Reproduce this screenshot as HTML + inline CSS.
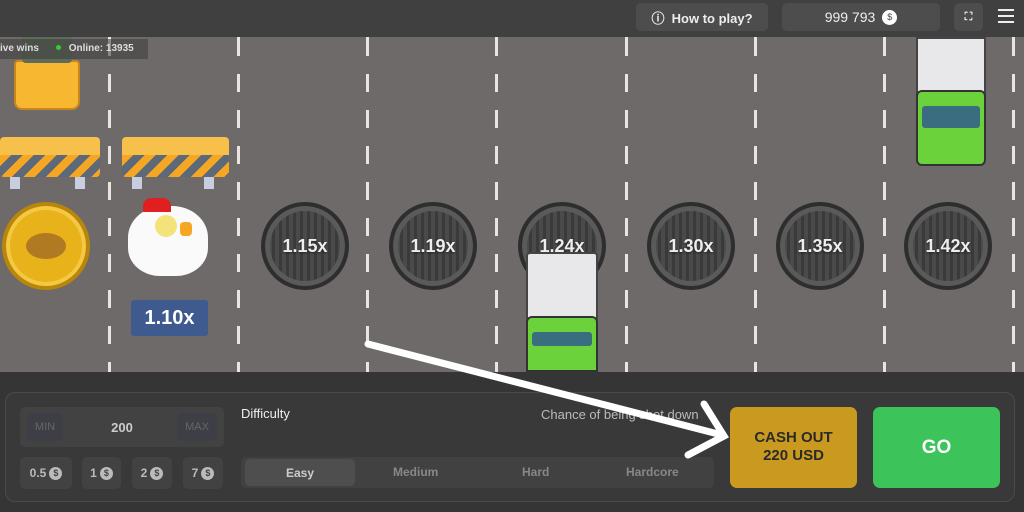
<!DOCTYPE html>
<html><head><style>
*{margin:0;padding:0;box-sizing:border-box}
body{width:1024px;height:512px;overflow:hidden;background:#6e6a69;font-family:"Liberation Sans",sans-serif;position:relative}
.top{position:absolute;left:0;top:0;width:1024px;height:37px;background:#404040}
.btn{position:absolute;background:#4d4d4d;border-radius:5px;color:#eee;font-weight:bold;font-size:13px;display:flex;align-items:center;justify-content:center}
.lane{position:absolute;top:37px;width:3px;height:335px;background:repeating-linear-gradient(to bottom,#e8e4e0 0 18px,transparent 18px 36px);background-position:0 1px}
.mh{position:absolute;width:88px;height:88px;border-radius:50%;background:repeating-linear-gradient(90deg,#3a3a3a 0 3px,#4a4a4a 3px 7px);border:4px solid #2e2e2e;box-shadow:inset 0 0 0 5px #5a5a5a;color:#eee;font-weight:bold;font-size:18px;display:flex;align-items:center;justify-content:center;text-shadow:0 1px 2px #222}
.bottom{position:absolute;left:0;top:372px;width:1024px;height:140px;background:#353535}
.panel{position:absolute;left:5px;top:392px;width:1010px;height:110px;border:1px solid #4a4a4a;border-radius:10px;background:#393939}
.s{position:absolute;background:#424242;border-radius:5px;color:#bbb;font-size:12px;font-weight:bold;display:flex;align-items:center;justify-content:center}
.coin{display:inline-block;width:13px;height:13px;border-radius:50%;background:#bbb;color:#444;font-size:9px;text-align:center;line-height:13px;margin-left:3px}
</style></head><body>
<div class="top"></div>
<div class="btn" style="left:636px;top:3px;width:132px;height:28px">ⓘ&nbsp; How to play?</div>
<div class="btn" style="left:782px;top:3px;width:158px;height:28px;font-weight:normal;font-size:14px">999 793 <span class="coin" style="width:15px;height:15px;background:#fff;margin-left:7px;line-height:15px">$</span></div>
<div class="btn" style="left:954px;top:3px;width:29px;height:28px;font-size:11px">⛶</div>
<div style="position:absolute;left:998px;top:9px;width:16px;height:14px;border-top:2px solid #eee;border-bottom:2px solid #eee"><div style="margin-top:4px;height:2px;background:#eee"></div></div>

<div class="lane" style="left:108px"></div><div class="lane" style="left:237px"></div><div class="lane" style="left:366px"></div><div class="lane" style="left:495px"></div><div class="lane" style="left:625px"></div><div class="lane" style="left:754px"></div><div class="lane" style="left:883px"></div><div class="lane" style="left:1012px"></div>

<!-- taxi -->
<div style="position:absolute;left:14px;top:60px;width:66px;height:50px;background:#f7b731;border-radius:4px 4px 8px 8px;border:2px solid #c8861a"></div>
<div style="position:absolute;left:22px;top:37px;width:50px;height:26px;background:#5e6a5a;border-radius:0 0 4px 4px"></div>
<div style="position:absolute;left:0;top:39px;width:148px;height:20px;background:rgba(60,60,60,.55);color:#ddd;font-size:10px;font-weight:bold;line-height:20px">ive wins <span style="display:inline-block;width:5px;height:5px;border-radius:50%;background:#3c3;margin:0 8px 1px 14px"></span>Online: 13935</div>
<!-- barriers -->
<div style="position:absolute;left:0;top:137px;width:100px;height:40px;background:repeating-linear-gradient(135deg,#f5a623 0 8px,#5d6878 8px 16px);border-radius:4px;border-top:18px solid #f6c04a"></div>
<div style="position:absolute;left:122px;top:137px;width:107px;height:40px;background:repeating-linear-gradient(135deg,#f5a623 0 8px,#5d6878 8px 16px);border-radius:4px;border-top:18px solid #f6c04a"></div>
<div style="position:absolute;left:10px;top:177px;width:10px;height:12px;background:#c8cde0"></div><div style="position:absolute;left:75px;top:177px;width:10px;height:12px;background:#c8cde0"></div>
<div style="position:absolute;left:132px;top:177px;width:10px;height:12px;background:#c8cde0"></div><div style="position:absolute;left:204px;top:177px;width:10px;height:12px;background:#c8cde0"></div>
<!-- gold -->
<div class="mh" style="left:2px;top:202px;background:#e8b21a;border-color:#b8860b;box-shadow:inset 0 0 0 4px #f4c842"><div style="width:40px;height:26px;border-radius:50%;background:#b07a22"></div></div>
<!-- chicken -->
<div style="position:absolute;left:128px;top:206px;width:80px;height:70px;background:#fafafa;border-radius:45% 45% 40% 40%"></div>
<div style="position:absolute;left:143px;top:198px;width:28px;height:14px;background:#e02020;border-radius:8px 8px 0 0"></div>
<div style="position:absolute;left:155px;top:215px;width:22px;height:22px;background:#f4e27a;border-radius:50%"></div>
<div style="position:absolute;left:180px;top:222px;width:12px;height:14px;background:#f5a623;border-radius:4px"></div>
<div style="position:absolute;left:131px;top:300px;width:77px;height:36px;background:#3e5a8e;border-radius:3px;color:#fff;font-weight:bold;font-size:20px;text-align:center;line-height:36px">1.10x</div>
<div class="mh" style="left:261px;top:202px">1.15x</div>
<div class="mh" style="left:389px;top:202px">1.19x</div>
<div class="mh" style="left:518px;top:202px">1.24x</div>
<div class="mh" style="left:647px;top:202px">1.30x</div>
<div class="mh" style="left:776px;top:202px">1.35x</div>
<div class="mh" style="left:904px;top:202px">1.42x</div>
<!-- trucks -->
<div style="position:absolute;left:916px;top:37px;width:70px;height:60px;background:#e8e8ea;border:2px solid #444"></div>
<div style="position:absolute;left:916px;top:90px;width:70px;height:76px;background:#6cd23c;border:2px solid #333;border-radius:6px"><div style="margin:14px 4px;height:22px;background:#3b6d80;border-radius:3px"></div></div>
<div style="position:absolute;left:526px;top:252px;width:72px;height:70px;background:#e8e8ea;border:2px solid #444;border-radius:4px"></div>
<div style="position:absolute;left:526px;top:316px;width:72px;height:56px;background:#6cd23c;border:2px solid #333;border-radius:6px 6px 0 0"><div style="margin:14px 4px;height:14px;background:#3b6d80;border-radius:3px"></div></div>

<div class="bottom"></div>
<div class="panel"></div>
<div class="s" style="left:20px;top:407px;width:204px;height:40px;color:#ccc;font-size:13px">200</div>
<div class="s" style="left:27px;top:413px;width:36px;height:28px;background:#3e3e46;color:#666;font-size:11px;font-weight:normal">MIN</div>
<div class="s" style="left:177px;top:413px;width:40px;height:28px;background:#3e3e46;color:#666;font-size:11px;font-weight:normal">MAX</div>
<div class="s" style="left:20px;top:457px;width:52px;height:32px">0.5<span class="coin">$</span></div>
<div class="s" style="left:82px;top:457px;width:39px;height:32px">1<span class="coin">$</span></div>
<div class="s" style="left:132px;top:457px;width:40px;height:32px">2<span class="coin">$</span></div>
<div class="s" style="left:183px;top:457px;width:40px;height:32px">7<span class="coin">$</span></div>
<div style="position:absolute;left:241px;top:406px;color:#eee;font-size:13px">Difficulty</div>
<div style="position:absolute;left:541px;top:407px;color:#bbb;font-size:13px">Chance of being shot down</div>
<div class="s" style="left:241px;top:457px;width:473px;height:31px;background:#414141"></div>
<div class="s" style="left:245px;top:459px;width:110px;height:27px;background:#4e4e4e;color:#ccc">Easy</div>
<div style="position:absolute;left:393px;top:465px;color:#888;font-size:12px;font-weight:bold">Medium</div>
<div style="position:absolute;left:522px;top:465px;color:#888;font-size:12px;font-weight:bold">Hard</div>
<div style="position:absolute;left:626px;top:465px;color:#888;font-size:12px;font-weight:bold">Hardcore</div>
<div style="position:absolute;left:730px;top:407px;width:127px;height:81px;background:#c99a1f;border-radius:7px;color:#2a2a2a;font-weight:bold;font-size:15px;text-align:center;padding-top:22px;line-height:18px">CASH OUT<br>220 USD</div>
<div style="position:absolute;left:873px;top:407px;width:127px;height:81px;background:#3cc35a;border-radius:7px;color:#fff;font-weight:bold;font-size:19px;text-align:center;line-height:81px">GO</div>
<svg style="position:absolute;left:0;top:0" width="1024" height="512"><g stroke="#fff" stroke-width="7" stroke-linecap="round" fill="none"><path d="M368 344 L722 435"/><path d="M704 404 L724 436 L688 455"/></g></svg>
</body></html>
